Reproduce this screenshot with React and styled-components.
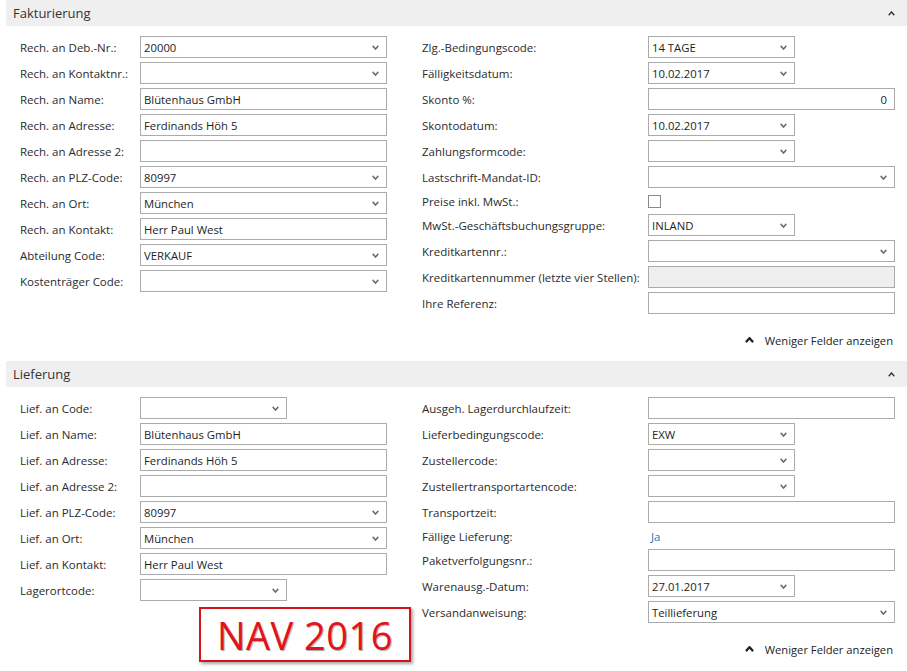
import React from "react";
import styled, { createGlobalStyle } from "styled-components";

const GlobalStyle = createGlobalStyle`
  html, body {
    margin: 0;
    padding: 0;
    background: #ffffff;
  }
  body {
    font-family: "Open Sans", "Noto Sans", "Liberation Sans", sans-serif;
    color: #262626;
  }
`;

const Page = styled.div`
  position: relative;
  width: 907px;
  height: 671px;
  padding-left: 6px;
  box-sizing: border-box;
  overflow: hidden;
`;

const Section = styled.section`
  display: flex;
  flex-direction: column;
`;

const SectionHeader = styled.div`
  height: 26px;
  background: #efefef;
  display: flex;
  align-items: center;
  justify-content: space-between;
  padding: 0 12px 0 7px;
  font-size: 13px;
  color: #333;
`;

const Body = styled.div`
  display: grid;
  grid-template-columns: 402px 1fr;
  padding: 10px 0 0 14px;
  align-items: start;
`;

const Column = styled.div`
  display: flex;
  flex-direction: column;
  gap: 4px;
`;

const Row = styled.div`
  display: grid;
  grid-template-columns: ${(p) => p.$labelWidth}px 1fr;
  align-items: center;
  height: ${(p) => (p.$compact ? 18 : 22)}px;
  font-size: 11.5px;
`;

const Label = styled.span`
  white-space: nowrap;
  color: #2b2b2b;
`;

const Field = styled.div`
  box-sizing: border-box;
  width: ${(p) => (p.$short ? 147 : 247)}px;
  height: 22px;
  border: 1px solid #ababab;
  background: ${(p) => (p.$disabled ? "#efefef" : "#fff")};
  display: flex;
  align-items: center;
  padding: 0 7px 0 3px;
  font-size: 11.3px;
  color: #1e1e1e;
  justify-content: ${(p) => (p.$right ? "flex-end" : "space-between")};
`;

const Check = styled.div`
  width: 11px;
  height: 11px;
  border: 1px solid #8a8a8a;
  background: #fff;
`;

const LinkValue = styled.span`
  color: #1f6fc5;
  font-size: 11.5px;
  padding-left: 3px;
`;

const Footer = styled.div`
  display: flex;
  justify-content: flex-end;
  align-items: center;
  gap: 11px;
  padding-right: 14px;
  margin-top: 17px;
  height: 18px;
  font-size: 11.2px;
  color: #222;
`;

const Stamp = styled.div`
  position: absolute;
  left: 199px;
  top: 607px;
  width: 208px;
  height: 51px;
  border: 2px solid #d3141c;
  box-shadow: 2px 2px 3px rgba(0, 0, 0, 0.35);
  display: flex;
  align-items: center;
  justify-content: center;
  color: #e3121b;
  font-size: 38px;
  letter-spacing: 0.5px;
  text-shadow: 1px 1px 1px rgba(0, 0, 0, 0.35);
  font-family: "Open Sans", "Noto Sans", sans-serif;
`;

const Chevron = ({ up, color = "#6a6a6a", w = 7, h = 5, sw = 1.7 }) => (
  <svg width={w} height={h} viewBox="0 0 8 5" preserveAspectRatio="none" style={{ flexShrink: 0 }}>
    <polyline
      points={up ? "0.8,4.2 4,1 7.2,4.2" : "0.8,0.8 4,4 7.2,0.8"}
      fill="none"
      stroke={color}
      strokeWidth={sw}
    />
  </svg>
);

const FieldRow = ({ f, labelWidth }) => {
  const compact = f.kind === "check" || f.kind === "link";
  let control;
  if (f.kind === "check") control = <Check />;
  else if (f.kind === "link") control = <LinkValue>{f.value}</LinkValue>;
  else
    control = (
      <Field $short={f.short} $disabled={f.kind === "disabled"} $right={f.right}>
        <span>{f.value || ""}</span>
        {f.kind === "select" && <Chevron />}
      </Field>
    );
  return (
    <Row $labelWidth={labelWidth} $compact={compact}>
      <Label>{f.label}</Label>
      {control}
    </Row>
  );
};

const billingLeft = [
  { label: "Rech. an Deb.-Nr.:", value: "20000", kind: "select" },
  { label: "Rech. an Kontaktnr.:", kind: "select" },
  { label: "Rech. an Name:", value: "Blütenhaus GmbH", kind: "text" },
  { label: "Rech. an Adresse:", value: "Ferdinands Höh 5", kind: "text" },
  { label: "Rech. an Adresse 2:", kind: "text" },
  { label: "Rech. an PLZ-Code:", value: "80997", kind: "select" },
  { label: "Rech. an Ort:", value: "München", kind: "select" },
  { label: "Rech. an Kontakt:", value: "Herr Paul West", kind: "text" },
  { label: "Abteilung Code:", value: "VERKAUF", kind: "select" },
  { label: "Kostenträger Code:", kind: "select" },
];

const billingRight = [
  { label: "Zlg.-Bedingungscode:", value: "14 TAGE", kind: "select", short: true },
  { label: "Fälligkeitsdatum:", value: "10.02.2017", kind: "select", short: true },
  { label: "Skonto %:", value: "0", kind: "text", right: true },
  { label: "Skontodatum:", value: "10.02.2017", kind: "select", short: true },
  { label: "Zahlungsformcode:", kind: "select", short: true },
  { label: "Lastschrift-Mandat-ID:", kind: "select" },
  { label: "Preise inkl. MwSt.:", kind: "check" },
  { label: "MwSt.-Geschäftsbuchungsgruppe:", value: "INLAND", kind: "select", short: true },
  { label: "Kreditkartennr.:", kind: "select" },
  { label: "Kreditkartennummer (letzte vier Stellen):", kind: "disabled" },
  { label: "Ihre Referenz:", kind: "text" },
];

const shipLeft = [
  { label: "Lief. an Code:", kind: "select", short: true },
  { label: "Lief. an Name:", value: "Blütenhaus GmbH", kind: "text" },
  { label: "Lief. an Adresse:", value: "Ferdinands Höh 5", kind: "text" },
  { label: "Lief. an Adresse 2:", kind: "text" },
  { label: "Lief. an PLZ-Code:", value: "80997", kind: "select" },
  { label: "Lief. an Ort:", value: "München", kind: "select" },
  { label: "Lief. an Kontakt:", value: "Herr Paul West", kind: "text" },
  { label: "Lagerortcode:", kind: "select", short: true },
];

const shipRight = [
  { label: "Ausgeh. Lagerdurchlaufzeit:", kind: "text" },
  { label: "Lieferbedingungscode:", value: "EXW", kind: "select", short: true },
  { label: "Zustellercode:", kind: "select", short: true },
  { label: "Zustellertransportartencode:", kind: "select", short: true },
  { label: "Transportzeit:", kind: "text" },
  { label: "Fällige Lieferung:", value: "Ja", kind: "link" },
  { label: "Paketverfolgungsnr.:", kind: "text" },
  { label: "Warenausg.-Datum:", value: "27.01.2017", kind: "select", short: true },
  { label: "Versandanweisung:", value: "Teillieferung", kind: "select" },
];

const FastTab = ({ title, left, right }) => (
  <Section>
    <SectionHeader>
      <span>{title}</span>
      <Chevron up color="#333" w={7} h={5} sw={1.6} />
    </SectionHeader>
    <Body>
      <Column>
        {left.map((f) => (
          <FieldRow key={f.label} f={f} labelWidth={120} />
        ))}
      </Column>
      <Column>
        {right.map((f) => (
          <FieldRow key={f.label} f={f} labelWidth={226} />
        ))}
      </Column>
    </Body>
    <Footer>
      <Chevron up color="#222" w={9} h={6} sw={2} />
      <span>Weniger Felder anzeigen</span>
    </Footer>
  </Section>
);

const Spacer = styled.div`
  height: 12px;
`;

export default function App() {
  return (
    <>
      <GlobalStyle />
      <Page>
        <FastTab title="Fakturierung" left={billingLeft} right={billingRight} />
        <Spacer />
        <FastTab title="Lieferung" left={shipLeft} right={shipRight} />
        <Stamp>NAV 2016</Stamp>
      </Page>
    </>
  );
}
